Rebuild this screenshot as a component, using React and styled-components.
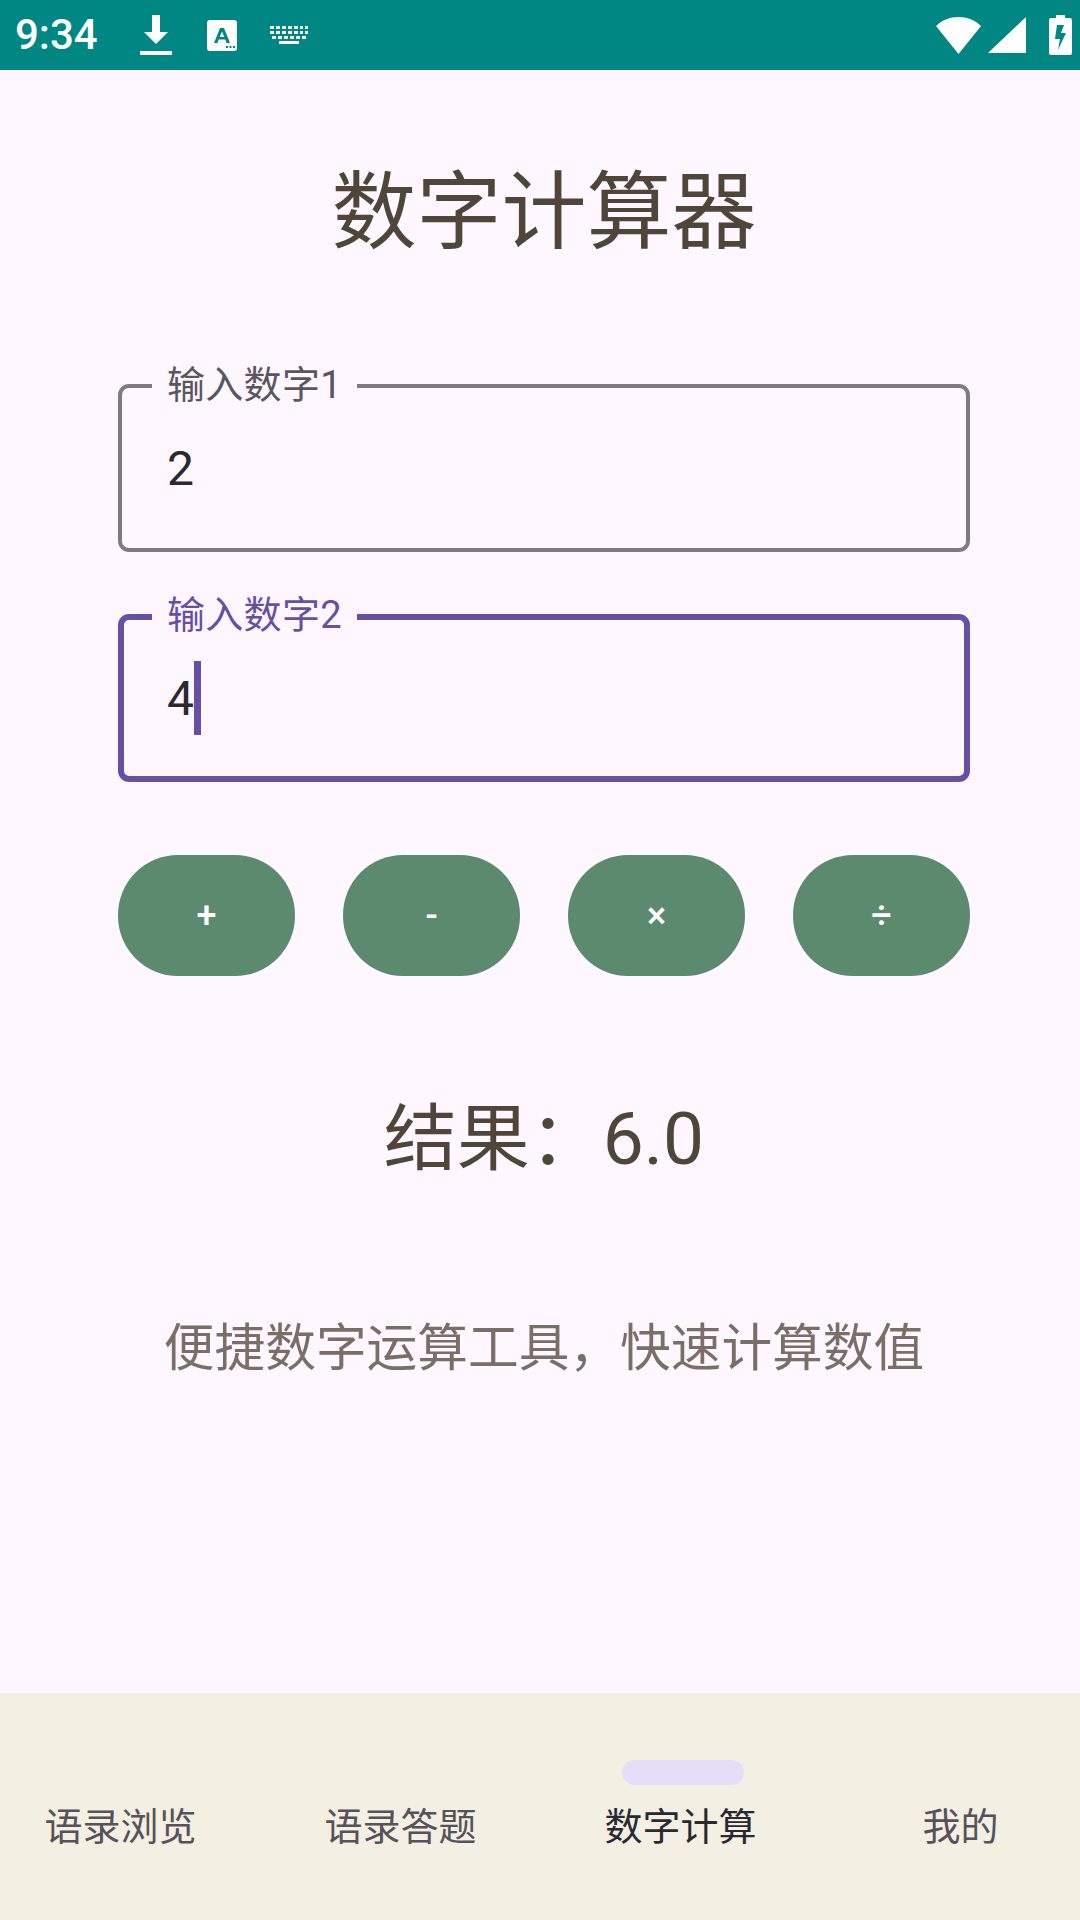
import React from 'react'
import styled, { createGlobalStyle } from 'styled-components'

const GlobalStyle = createGlobalStyle`
  html, body {
    margin: 0;
    padding: 0;
    background: #FEF7FF;
  }
  * { box-sizing: border-box; }
  body { font-family: Roboto, "Noto Sans CJK SC", sans-serif; }
`

const Page = styled.div`
  display: flex;
  flex-direction: column;
  width: 1080px;
  height: 1920px;
  overflow: hidden;
  background: #FEF7FF;
`

const StatusBar = styled.header`
  display: flex;
  align-items: center;
  justify-content: space-between;
  flex: 0 0 70px;
  padding: 0 8px 0 15px;
  background: #008784;
  color: #fff;
`

const StatusGroup = styled.div`
  display: flex;
  align-items: center;
`

const Clock = styled.span`
  font-size: 42px;
  font-weight: 500;
  width: 125px;
  line-height: 70px;
`

const Main = styled.main`
  flex: 1;
  display: flex;
  flex-direction: column;
  align-items: center;
  padding: 97px 110px 0 118px;
`

const Title = styled.h1`
  margin: 0;
  font-size: 85px;
  font-weight: 400;
  line-height: 92px;
  color: #4F4539;
`

const Field = styled.div`
  position: relative;
  width: 852px;
  height: 168px;
  margin-top: ${p => p.$top}px;
  padding: 0 ${p => (p.$focused ? 43 : 45)}px;
  display: flex;
  align-items: center;
  border: ${p => (p.$focused ? '6px solid #6750A4' : '4px solid #7E7A80')};
  border-radius: 11px;
  font-size: 48px;
  color: #2A2830;
`

const FieldLabel = styled.label`
  position: absolute;
  top: ${p => (p.$focused ? -27 : -25)}px;
  left: ${p => (p.$focused ? 28 : 30)}px;
  padding: 0 15px;
  background: #FEF7FF;
  font-size: 38px;
  line-height: 44px;
  letter-spacing: 0.3px;
  color: ${p => (p.$focused ? '#6750A4' : '#5A5560')};
`

const Caret = styled.span`
  display: inline-block;
  width: 7px;
  height: 74px;
  background: #6750A4;
`

const FieldText = styled.span`
  display: flex;
  align-items: center;
`

const ButtonRow = styled.div`
  display: flex;
  justify-content: space-between;
  width: 852px;
  margin-top: 73px;
`

const OpButton = styled.button`
  width: 177px;
  height: 121px;
  border: 0;
  border-radius: 60px;
  background: #5B8A6F;
  color: #fff;
  font-family: inherit;
  font-size: 36px;
  font-weight: 500;
`

const Result = styled.div`
  margin-top: 120px;
  font-size: 73px;
  line-height: 86px;
  color: #4F4539;
`

const Note = styled.p`
  margin: 134px 0 0;
  font-size: 50.7px;
  line-height: 66px;
  color: #7A6E66;
`

const NavBar = styled.nav`
  flex: 0 0 227px;
  display: grid;
  grid-template-columns: repeat(4, 280px);
  justify-content: center;
  background: #F3EFE2;
`

const NavItem = styled.div`
  display: flex;
  flex-direction: column;
  align-items: center;
  padding-top: 67px;
  margin-left: 1px;
  font-size: 38px;
  line-height: 46px;
  color: ${p => (p.$active ? '#2A2830' : '#56525A')};
`

const NavPill = styled.span`
  width: 122px;
  height: 25px;
  border-radius: 13px;
  margin: 0 0 19px 5px;
  background: ${p => (p.$active ? '#E6DEF8' : 'transparent')};
`

const Svg = styled.svg`
  display: block;
  margin-right: ${p => p.$gap || 0}px;
  fill: #fff;
`

function StatusIcons() {
  return (
    <StatusGroup>
      <Svg width="32" height="42" viewBox="0 0 32 42" $gap={35}>
        <path d="M12 1h8v17h8L16 30 4 18h8z" />
        <rect x="0" y="37" width="32" height="4" />
      </Svg>
      <Svg width="30" height="31" viewBox="0 0 30 31" $gap={33}>
        <path fillRule="evenodd" d="M3 0h24a3 3 0 0 1 3 3v25a3 3 0 0 1-3 3H3a3 3 0 0 1-3-3V3a3 3 0 0 1 3-3zM13 8L7 23h3.500l1.200-3.500h6.600L19.500 23H23L17 8zM15 11.500l2.300 5.500h-4.600zM19 26h2v2h-2zM22.500 26h2v2h-2zM26 26h2v2h-2z" />
      </Svg>
      <Svg width="38" height="18" viewBox="0 0 38 18">
        <path d="M0 0h4v3H0zM6 0h4v3H6zM12 0h4v3h-4zM18 0h4v3h-4zM24 0h4v3h-4zM30 0h3v3h-3zM35 0h3v3h-3zM0 5h4v3H0zM6 5h4v3H6zM12 5h4v3h-4zM18 5h4v3h-4zM24 5h4v3h-4zM30 5h3v3h-3zM35 5h3v3h-3zM2 10h4v3H2zM8 10h4v3H8zM14 10h4v3h-4zM20 10h4v3h-4zM26 10h4v3h-4zM32 10h4v3h-4zM9 15h20v3H9z" />
      </Svg>
    </StatusGroup>
  )
}

function SystemIcons() {
  return (
    <StatusGroup>
      <Svg width="45" height="37" viewBox="0 0 45 37" $gap={7}>
        <path d="M0 9C6 3 14 0 22.500 0S39 3 45 9L22.500 37z" />
      </Svg>
      <Svg width="38" height="36" viewBox="0 0 38 36" $gap={23}>
        <path d="M38 0v36H0z" />
      </Svg>
      <Svg width="23" height="40" viewBox="0 0 23 40">
        <path fillRule="evenodd" d="M7 0h9v3h5a2 2 0 0 1 2 2v33a2 2 0 0 1-2 2H2a2 2 0 0 1-2-2V5a2 2 0 0 1 2-2h5zM8 10l-2 14h5l-2 11 8-17h-5l3-8z" />
      </Svg>
    </StatusGroup>
  )
}

const OPERATORS = ['+', '-', '×', '÷']
const TABS = ['语录浏览', '语录答题', '数字计算', '我的']

export default function App() {
  return (
    <Page>
      <GlobalStyle />
      <StatusBar>
        <StatusGroup>
          <Clock>9:34</Clock>
          <StatusIcons />
        </StatusGroup>
        <SystemIcons />
      </StatusBar>
      <Main>
        <Title>数字计算器</Title>
        <Field $top={125}>
          <FieldLabel>输入数字1</FieldLabel>
          <FieldText>2</FieldText>
        </Field>
        <Field $top={62} $focused>
          <FieldLabel $focused>输入数字2</FieldLabel>
          <FieldText>4<Caret /></FieldText>
        </Field>
        <ButtonRow>
          {OPERATORS.map(op => <OpButton key={op}>{op}</OpButton>)}
        </ButtonRow>
        <Result>结果：6.0</Result>
        <Note>便捷数字运算工具，快速计算数值</Note>
      </Main>
      <NavBar>
        {TABS.map((tab, i) => (
          <NavItem key={tab} $active={i === 2}>
            <NavPill $active={i === 2} />
            {tab}
          </NavItem>
        ))}
      </NavBar>
    </Page>
  )
}
